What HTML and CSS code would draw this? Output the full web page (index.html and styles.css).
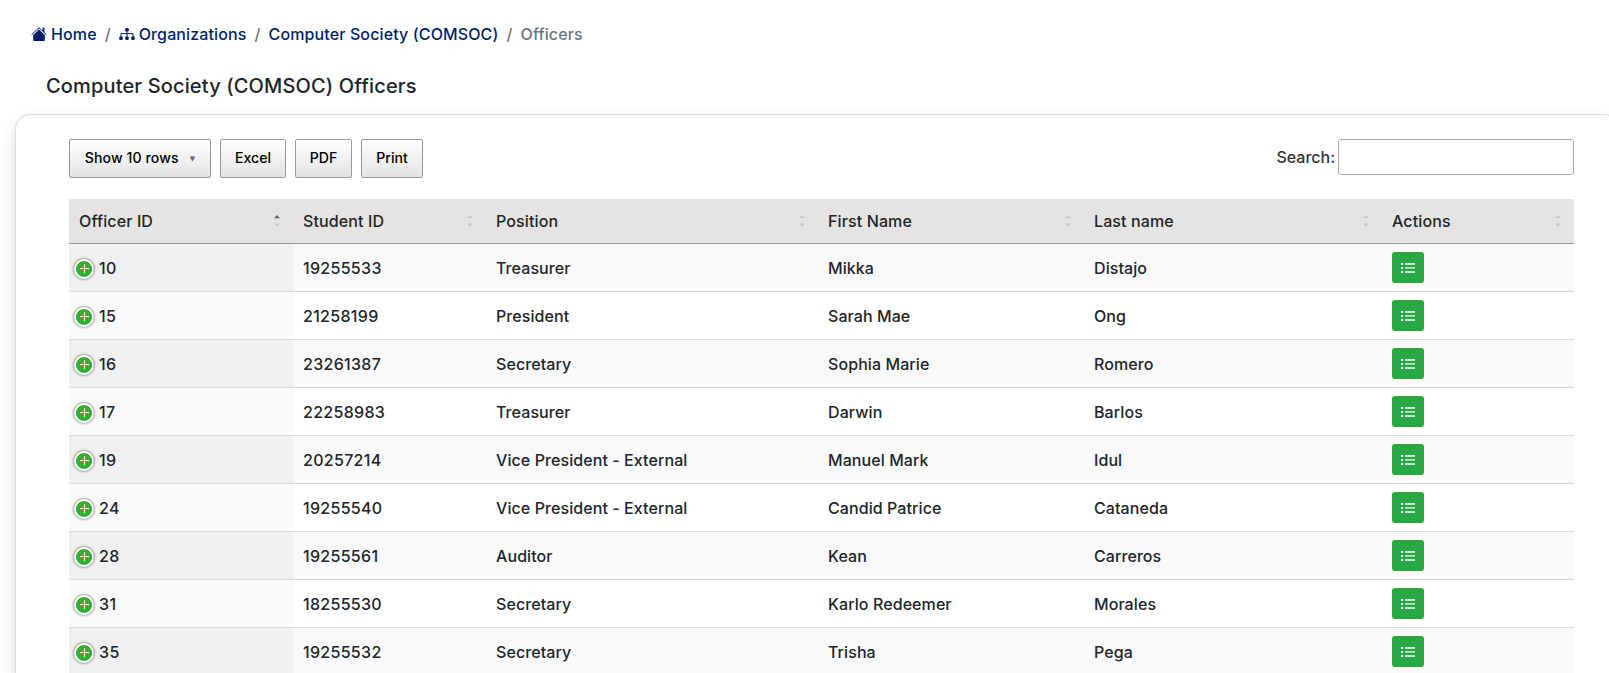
FILE: index.html
```html
<!DOCTYPE html>
<html lang="en">
<head>
<meta charset="utf-8">
<title>Computer Society (COMSOC) Officers</title>
<link rel="stylesheet" href="styles.css">
</head>
<body>
<svg class="sprite" aria-hidden="true">
  <symbol id="list" viewBox="0 0 14 10"><path d="M0 0h2v2H0zM0 4h2v2H0zM0 8h2v2H0zM4 .2h10v1.6H4zM4 4.2h10v1.4H4zM4 8.2h10v1.6H4z" fill="#fff"/></symbol>
  <symbol id="sort" viewBox="0 0 6 14"><path class="up" d="M0 4.2 3 1l3 3.2z"/><path class="down" d="M0 9.6h6L3 13z"/></symbol>
</svg>
<nav class="breadcrumb">
  <a class="crumb"><svg class="home" width="16" height="16" viewBox="0 0 16 16"><path d="M.6 8.6 8 1.8l7.4 6.8" fill="none" stroke="#001f6b" stroke-width="1"/><path d="M11.5 1.8h2v4.6l-2-1.8z" fill="#001f6b"/><path d="M8 3.6 2.2 9v5.2c0 .5.3.8.8.8h10c.5 0 .8-.3.8-.8V9z" fill="#001f6b"/></svg>Home</a>
  <span class="slash">/</span>
  <a class="crumb"><svg class="org" width="16" height="14" viewBox="0 0 16 14"><path d="M8 3v7M2 10V6.6h12V10" fill="none" stroke="#001f6b" stroke-width="1"/><rect x="6.2" y="1" width="3.6" height="3.6" rx="1.3" fill="#001f6b"/><rect x=".2" y="9.4" width="3.6" height="3.6" rx="1.3" fill="#001f6b"/><rect x="6.2" y="9.4" width="3.6" height="3.6" rx="1.3" fill="#001f6b"/><rect x="12.2" y="9.4" width="3.6" height="3.6" rx="1.3" fill="#001f6b"/></svg>Organizations</a>
  <span class="slash">/</span>
  <a class="crumb">Computer Society (COMSOC)</a>
  <span class="slash">/</span>
  <span class="current">Officers</span>
</nav>
<h1 class="title">Computer Society (COMSOC) Officers</h1>
<main class="card">
  <div class="toolbar">
    <button class="btn rows">Show 10 rows<span class="caret">▼</span></button>
    <button class="btn excel">Excel</button>
    <button class="btn pdf">PDF</button>
    <button class="btn print">Print</button>
    <label class="search">Search:<input class="search-input" type="search"></label>
  </div>
  <table class="table">
    <colgroup><col class="c1"><col class="c2"><col class="c3"><col class="c4"><col class="c5"><col class="c6"></colgroup>
    <thead>
      <tr>
        <th><div class="head asc">Officer ID<svg class="sort"><use href="#sort"/></svg></div></th>
        <th><div class="head">Student ID<svg class="sort"><use href="#sort"/></svg></div></th>
        <th><div class="head">Position<svg class="sort"><use href="#sort"/></svg></div></th>
        <th><div class="head">First Name<svg class="sort"><use href="#sort"/></svg></div></th>
        <th><div class="head">Last name<svg class="sort"><use href="#sort"/></svg></div></th>
        <th><div class="head">Actions<svg class="sort"><use href="#sort"/></svg></div></th>
      </tr>
    </thead>
    <tbody>
      <tr><td><div class="idcell"><i class="plus"></i>10</div></td><td class="num">19255533</td><td>Treasurer</td><td>Mikka</td><td>Distajo</td><td><a class="view"><svg class="list"><use href="#list"/></svg></a></td></tr>
      <tr><td><div class="idcell"><i class="plus"></i>15</div></td><td class="num">21258199</td><td>President</td><td>Sarah Mae</td><td>Ong</td><td><a class="view"><svg class="list"><use href="#list"/></svg></a></td></tr>
      <tr><td><div class="idcell"><i class="plus"></i>16</div></td><td class="num">23261387</td><td>Secretary</td><td>Sophia Marie</td><td>Romero</td><td><a class="view"><svg class="list"><use href="#list"/></svg></a></td></tr>
      <tr><td><div class="idcell"><i class="plus"></i>17</div></td><td class="num">22258983</td><td>Treasurer</td><td>Darwin</td><td>Barlos</td><td><a class="view"><svg class="list"><use href="#list"/></svg></a></td></tr>
      <tr><td><div class="idcell"><i class="plus"></i>19</div></td><td class="num">20257214</td><td>Vice President - External</td><td>Manuel Mark</td><td>Idul</td><td><a class="view"><svg class="list"><use href="#list"/></svg></a></td></tr>
      <tr><td><div class="idcell"><i class="plus"></i>24</div></td><td class="num">19255540</td><td>Vice President - External</td><td>Candid Patrice</td><td>Cataneda</td><td><a class="view"><svg class="list"><use href="#list"/></svg></a></td></tr>
      <tr><td><div class="idcell"><i class="plus"></i>28</div></td><td class="num">19255561</td><td>Auditor</td><td>Kean</td><td>Carreros</td><td><a class="view"><svg class="list"><use href="#list"/></svg></a></td></tr>
      <tr><td><div class="idcell"><i class="plus"></i>31</div></td><td class="num">18255530</td><td>Secretary</td><td>Karlo Redeemer</td><td>Morales</td><td><a class="view"><svg class="list"><use href="#list"/></svg></a></td></tr>
      <tr><td><div class="idcell"><i class="plus"></i>35</div></td><td class="num">19255532</td><td>Secretary</td><td>Trisha</td><td>Pega</td><td><a class="view"><svg class="list"><use href="#list"/></svg></a></td></tr>
    </tbody>
  </table>
</main>
</body>
</html>
```

FILE: styles.css
```css
* { box-sizing: border-box; }
html, body { height: 673px; overflow: hidden; }
body {
  display: flex;
  flex-direction: column;
  margin: 0;
  background: #fff;
  color: #212529;
  font: 500 16px/24px Inter, "Liberation Sans", sans-serif;
  letter-spacing: .08px;
}
.sprite { display: none; }
.breadcrumb { display: flex; align-items: center; padding: 22px 0 0 31px; letter-spacing: .12px; }
.crumb { display: flex; align-items: center; color: #001f6b; }
.home { margin-right: 4px; }
.org { margin-right: 4px; }
.slash { padding: 0 8px; color: #6c757d; }
.current { color: #6c757d; }
.title { margin: 28px 0 0 46px; font-size: 20px; line-height: 24px; font-weight: 500; letter-spacing: .15px; }
.card {
  flex: 1;
  min-height: 0;
  width: 1604px;
  margin: 16px 0 0 15px;
  padding: 24px 0 0 53px;
  border: 1px solid #dcdcdc;
  border-bottom: 0;
  border-radius: 15px 15px 0 0;
  background: #fff;
  box-shadow: 0 8px 16px rgba(0, 0, 0, .15);
  overflow: hidden;
}
.toolbar { display: flex; align-items: flex-start; width: 1505px; height: 60px; }
.btn {
  height: 39px;
  margin: 0 9px 0 0;
  padding: 0 0 1px;
  border: 1px solid #999;
  border-radius: 2px;
  background: linear-gradient(#fff, #e3e3e3);
  color: #000;
  font: 500 14.08px/22px Inter, "Liberation Sans", sans-serif;
  text-align: center;
}
.rows { width: 142px; letter-spacing: .1px; }
.excel { width: 66px; }
.pdf { width: 57px; }
.print { width: 62px; }
.caret { margin-left: 11px; font: 7px/8px "DejaVu Sans", sans-serif; color: #666; vertical-align: 2px; }
.search { display: flex; align-items: center; height: 36px; margin-left: auto; color: #333; letter-spacing: 0; }
.search-input {
  width: 236px;
  height: 36px;
  margin: 0 0 0 3px;
  border: 1px solid #aaa;
  border-radius: 3px;
  background: transparent;
}
.table { width: 1505px; table-layout: fixed; border-collapse: separate; border-spacing: 0; }
.c1 { width: 224px; }
.c2 { width: 193px; }
.c3 { width: 332px; }
.c4 { width: 266px; }
.c5 { width: 298px; }
.c6 { width: 192px; }
th { height: 45px; padding: 0 13px 0 10px; background: #e5e4e2; border-bottom: 1px solid #979797; font-weight: 500; text-align: left; letter-spacing: .12px; }
.head { display: flex; align-items: center; justify-content: space-between; }
.sort { width: 6px; height: 14px; fill: #cbcac9; --up: #cbcac9; }
.asc .sort { --up: #666; }
.up { fill: var(--up); }
td { height: 48px; padding: 0 10px; border-bottom: 1px solid #d9d9d9; }
.num { letter-spacing: .3px; }
tbody tr:nth-child(odd) td { background: #f9f9f9; }
tbody td:first-child { background: #fafafa; }
tbody tr:nth-child(odd) td:first-child { background: #f0f0f0; }
.idcell { display: flex; align-items: center; margin-left: -5px; letter-spacing: .4px; }
.plus {
  width: 20px;
  height: 20px;
  margin: 2px 5px 0 0;
  border: 2px solid #fff;
  border-radius: 50%;
  box-shadow: 0 0 3px #444;
  background:
    linear-gradient(#fff, #fff) center / 9px 1px no-repeat,
    linear-gradient(#fff, #fff) center / 1px 9px no-repeat,
    #31b131;
}
.view { display: flex; align-items: center; justify-content: center; width: 32px; height: 31px; border-radius: 3px; background: #28a745; }
.list { width: 14px; height: 10px; }
```
